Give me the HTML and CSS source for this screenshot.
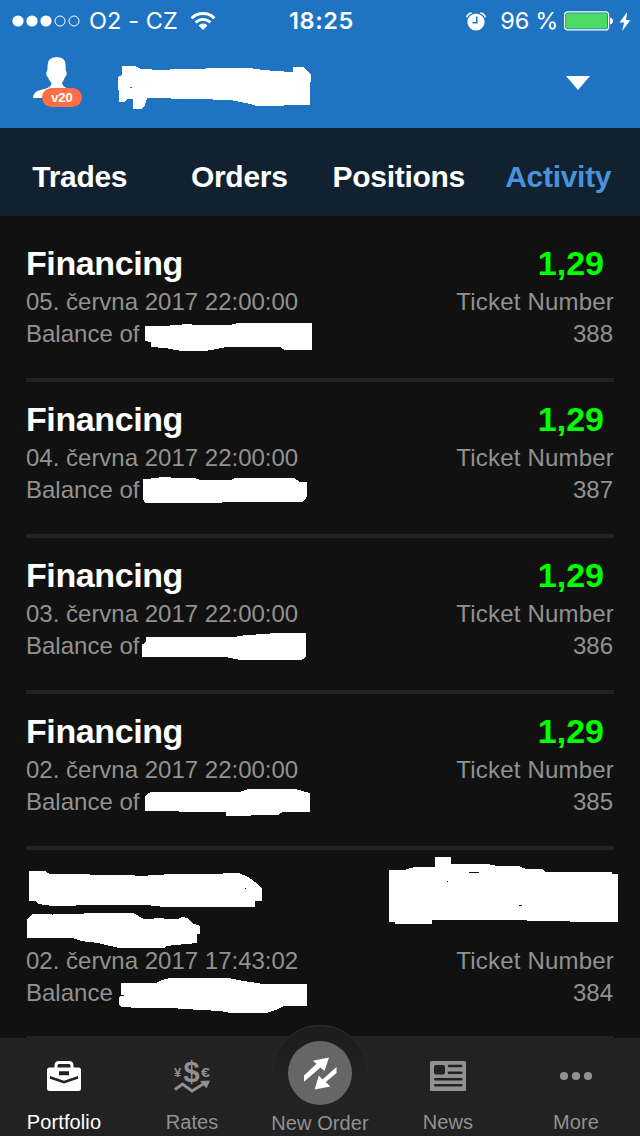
FILE: index.html
```
<!DOCTYPE html>
<html lang="en">
<head>
  <meta charset="UTF-8">
  <meta name="viewport" content="width=device-width, initial-scale=1.0">
  <title>Portfolio – Activity</title>
  <link rel="stylesheet" href="styles.css">
</head>
<body>
  <div class="phone">
    <header class="top">
      <div class="status">
        <div class="status-left">
          <svg class="signal" width="68" height="12" viewBox="0 0 68 12">
            <g fill="#fff"><circle cx="6" cy="6" r="5.6"/><circle cx="20" cy="6" r="5.6"/><circle cx="34" cy="6" r="5.6"/></g>
            <g fill="none" stroke="#fff"><circle cx="48" cy="6" r="5"/><circle cx="62" cy="6" r="5"/></g>
          </svg>
          <span class="carrier">O2 - CZ</span>
          <svg class="wifi" width="26" height="20" viewBox="0 0 26 20">
            <g fill="none" stroke="#fff" stroke-width="2.8">
              <path d="M1.6 7.2a16.2 16.2 0 0 1 22.8 0"/>
              <path d="M5.6 11.4a10.4 10.4 0 0 1 14.8 0"/>
            </g>
            <path d="M8.6 14.4a6.2 6.2 0 0 1 8.8 0L13 19z" fill="#fff"/>
          </svg>
        </div>
        <span class="clock">18:25</span>
        <div class="status-right">
          <svg class="alarm" width="20" height="19" viewBox="0 0 20 19">
            <circle cx="10" cy="10" r="8.6" fill="#fff"/>
            <path d="M.8 5.4Q1.6 1.6 5.6 1M19.2 5.4Q18.4 1.6 14.4 1" fill="none" stroke="#fff" stroke-width="1.7"/>
            <path d="M10.8 4.5v6.3H6.5" fill="none" stroke="#1f74c2" stroke-width="1.5"/>
          </svg>
          <span class="percent">96 %</span>
          <svg class="battery" width="50" height="20" viewBox="0 0 50 20">
            <rect x=".6" y=".9" width="44" height="18" rx="3" fill="none" stroke="#fff" stroke-width="1.2"/>
            <rect x="2" y="2.3" width="41.2" height="15.2" rx="1.6" fill="#4cd964"/>
            <path d="M46 6.5q3 1 3 3.5t-3 3.5z" fill="#fff"/>
          </svg>
          <svg class="bolt" width="12" height="19" viewBox="0 0 12 19"><path d="M8.2 0L.5 10.4h4.6L3.2 19 11.5 8H7z" fill="#fff"/></svg>
        </div>
      </div>
      <div class="account">
        <div class="avatar">
          <svg width="50" height="44" viewBox="0 0 50 44">
            <path d="M15.8 8Q16 1.500 24.500 1 33 1 33.500 8L33.800 15q1.200.3.900 3-.6 2.600-1.800 3.200Q31.500 25 30 27q.5 3.500 6 5.500l8 4V42H1q0-5 5-7.200L14 32.500q5.500-2 5.500-5.500-2.600-2.500-3.400-5.800-1.600-.4-1.900-3.200-.1-2.600 1-3z" fill="#fff"/>
            <path d="M34 36h16v8H34z" fill="#1f74c2"/>
          </svg>
          <span class="badge">v20</span>
        </div>
        <svg class="scribble" viewBox="0 40 640 88">
          <path d="M122 66h13l6 3 21 1 16-1h24l8-1h40l5 1 20 2 18 1v-5h10l8 8v6l-1 3v21l-53 1-7-2-20-4-35-1-48-1-2 7-3 4h-9V99h-5l-4 3h-5l-1-25 4-2z"/>
          <path class="hole" d="M130 87h2v1h-2z"/>
        </svg>
        <svg class="caret" width="24" height="14" viewBox="0 0 24 14"><path d="M0 0h24L12 14z" fill="#fff"/></svg>
      </div>
    </header>

    <nav class="tabs">
      <a class="tab">Trades</a>
      <a class="tab">Orders</a>
      <a class="tab">Positions</a>
      <a class="tab active">Activity</a>
    </nav>

    <main class="list">
      <article class="row">
        <div class="info">
          <h2>Financing</h2>
          <p>05. června 2017 22:00:00</p>
          <p>Balance of</p>
        </div>
        <div class="ticket">
          <strong>1,29</strong>
          <p>Ticket Number</p>
          <p>388</p>
        </div>
        <svg class="scribble" viewBox="0 226 640 156">
          <path d="M145 326h13l24-1v-1h10v1h38l8-2h74v27h-27l-5-3h-54l-14 3-8 1h-22l-17-3-14-1v-5l-6-1z"/>
        </svg>
      </article>
      <article class="row">
        <div class="info">
          <h2>Financing</h2>
          <p>04. června 2017 22:00:00</p>
          <p>Balance of</p>
        </div>
        <div class="ticket">
          <strong>1,29</strong>
          <p>Ticket Number</p>
          <p>387</p>
        </div>
        <svg class="scribble" viewBox="0 382 640 156">
          <path d="M143 479l16-1v-1h12v1h23l7 2h30l4-2h59l6 4h7v14l-2 4-3 2h-80v1h-77l-2-4z"/>
        </svg>
      </article>
      <article class="row">
        <div class="info">
          <h2>Financing</h2>
          <p>03. června 2017 22:00:00</p>
          <p>Balance of</p>
        </div>
        <div class="ticket">
          <strong>1,29</strong>
          <p>Ticket Number</p>
          <p>386</p>
        </div>
        <svg class="scribble" viewBox="0 538 640 156">
          <path d="M146 637h91v-1l25-2 15-1h29v23l-2 3-5 1h-59l-14-3h-84v-13h2l2-3z"/>
        </svg>
      </article>
      <article class="row">
        <div class="info">
          <h2>Financing</h2>
          <p>02. června 2017 22:00:00</p>
          <p>Balance of</p>
        </div>
        <div class="ticket">
          <strong>1,29</strong>
          <p>Ticket Number</p>
          <p>385</p>
        </div>
        <svg class="scribble" viewBox="0 694 640 156">
          <path d="M145 797l3-4 4-1h87l10-3h46l15 4v19h-27l-5 3h-20l-14 1h-18v-4h-47v-1h-34z"/>
        </svg>
      </article>
      <article class="row tall">
        <div class="info">
          <p>02. června 2017 17:43:02</p>
          <p>Balance</p>
        </div>
        <div class="ticket">
          <p>Ticket Number</p>
          <p>384</p>
        </div>
        <svg class="scribble" viewBox="0 850 640 190">
          <path d="M29 871h16l5 3 80 1 10 1 32-2h43l15-1h9l9 4 10 7 4 5v12h-7v6h-90l-19-2H99l-46 1-15-2-3-3h-6z"/>
          <path d="M27 919l6-5h19l63-1h18l11 6h9l2-1h8l2 1h13l4-2 5 1 7 6 6 2v8h-3v9l-31 3-1 2h-46l-21-5-17-2-8-3H27z"/>
          <path d="M121 983h35l6-3 8-2h58l10 2 25 4h44v22h-23l-8 4-10 3h-36l-9-2-21-1-30-2h-29l-20-1-2-3v-7l2-1z"/>
          <path d="M389 870h15l11-3h20v-10h16v7h36l10 2h22l7 3h16l3 3h67v2h6v48h-48v-1h-43v-1h-95v4h-37v-2h-6z"/>
          <path class="hole" d="M469 872h10v1h-10zM447 881h1v1h-1zM519 905h3v1h-3zM52 914h1v1h-1zM245 888h1v1h-1zM121 995h3v1h-3z"/>
        </svg>
      </article>
    </main>

    <nav class="bottom">
      <a class="item active">
        <svg width="36" height="36" viewBox="0 0 36 36">
          <path d="M10 11V7.500Q10 4.500 13 4.500h10q3 0 3 3V11" fill="none" stroke="#fff" stroke-width="3"/>
          <rect x="1" y="9.500" width="34" height="23.500" rx="2.500" fill="#fff"/>
          <path d="M13 13.200h10v4H13zM4 18l14 4.700L32 18v2.800l-14 4.700-14-4.700z" fill="#222"/>
        </svg>
        <span>Portfolio</span>
      </a>
      <a class="item">
        <svg class="rates" width="38" height="36" viewBox="0 0 38 36">
          <g class="money">
            <text x="1" y="18.500" font-size="13">¥</text>
            <text x="10.500" y="23.500" font-size="29">$</text>
            <text x="28" y="19" font-size="13" textLength="9" lengthAdjust="spacingAndGlyphs">€</text>
          </g>
          <path d="M2 31.500l7.500-5.500 9.500 7 12-7.500" fill="none" stroke="#919191" stroke-width="3"/>
          <path d="M27 23l10-.5-3.500 8z" fill="#919191"/>
        </svg>
        <span>Rates</span>
      </a>
      <a class="item order">
        <div class="halo"><svg width="64" height="64" viewBox="0 0 64 64">
          <circle cx="32" cy="32" r="32" fill="#666"/>
          <path d="M41 16.500L24.800 19.700l3.700 3L16 34.500v6.300L32.400 26.600l4.100 3.500zM48.500 26v6L37.800 41l4.500 4.400L26.600 48.500l4.300-14 3.500 4z" fill="#fff"/>
        </svg></div>
        <span>New Order</span>
      </a>
      <a class="item">
        <svg width="36" height="36" viewBox="0 0 36 36">
          <rect y="3" width="36" height="30" rx="1.500" fill="#919191"/>
          <rect x="4" y="7" width="11" height="9.500" rx="2" fill="#222"/>
          <path d="M19 8h12.200M19 14.700h12.200M5.300 21.300h26M5.300 27.300h26" stroke="#222" stroke-width="2.600" stroke-linecap="round"/>
        </svg>
        <span>News</span>
      </a>
      <a class="item">
        <svg width="36" height="36" viewBox="0 0 36 36" fill="#919191">
          <circle cx="6" cy="18" r="4.100"/><circle cx="18" cy="18" r="4.100"/><circle cx="30" cy="18" r="4.100"/>
        </svg>
        <span>More</span>
      </a>
    </nav>
  </div>
</body>
</html>
```

FILE: styles.css
```
* { box-sizing:border-box; }
body { margin:0; background:#111; color:#fff; font-family:"Liberation Sans",Arial,sans-serif; }
h2, p { margin:0; }
svg { display:block; flex:none; }
.phone { width:640px; height:1136px; display:flex; flex-direction:column; overflow:hidden; }

/* status bar + account */
.top { height:128px; background:#1f74c2; }
.status { height:40px; display:grid; grid-template-columns:1fr auto 1fr; align-items:center; padding:1px 9px 0 12px; font-family:Inter,sans-serif; font-size:23.5px; line-height:40px; }
.status-left, .status-right { display:flex; align-items:center; }
.status-right { justify-content:flex-end; }
.carrier { margin-left:9px; letter-spacing:.1px; }
.wifi { margin-left:12px; }
.clock { font-weight:600; letter-spacing:.6px; }
.percent { margin-left:14px; letter-spacing:-.3px; }
.battery { margin-left:6px; }
.bolt { margin-left:5px; }

.account { position:relative; height:88px; display:flex; align-items:center; justify-content:space-between; padding:0 50px 0 32px; }
.avatar { position:relative; margin-top:-12px; }
.badge { position:absolute; left:10px; top:32px; width:40px; height:19px; border-radius:10px; background:#ff6e46; font-size:13px; font-weight:bold; line-height:19px; text-align:center; }
.caret { margin-top:-2px; }
.scribble { position:absolute; left:0; top:0; width:640px; fill:#fff; shape-rendering:crispEdges; pointer-events:none; }
.hole { fill:#111; }
.account .hole { fill:#1f74c2; }

/* section tabs */
.tabs { height:88px; background:#122130; display:grid; grid-template-columns:repeat(4,1fr); align-items:center; padding:10px 2px 0 0; }
.tab { text-align:center; font-size:30px; font-weight:bold; letter-spacing:-.3px; white-space:nowrap; }
.tab.active { color:#4992dc; }

/* activity list */
.list { height:822px; padding-top:10px; overflow:hidden; }
.row { position:relative; height:156px; padding:17px 26px 0; display:flex; justify-content:space-between; color:#919191; font-size:24px; line-height:32px; }
.row::after { content:""; position:absolute; left:26px; right:26px; bottom:0; height:4px; background:#222; }
.row h2, .row strong { display:block; height:43px; font-size:34px; line-height:40px; font-weight:bold; }
.row h2 { color:#fff; letter-spacing:-.4px; }
.row strong { color:#0f0; padding-right:10px; }
.ticket { text-align:right; }
.ticket p { letter-spacing:.2px; }
.ticket p:last-child { padding-right:1px; letter-spacing:0; }
.row.tall { height:190px; padding-top:95px; }

/* bottom navigation */
.bottom { height:98px; background:#222; display:grid; grid-template-columns:repeat(5,1fr); }
.item { position:relative; display:flex; flex-direction:column; align-items:center; padding-top:20px; color:#919191; font-size:20px; line-height:24px; }
.item span { position:relative; margin-top:16px; letter-spacing:.1px; }
.item.active { color:#fff; }
.item.order span { margin-top:53px; }
.halo { position:absolute; top:-13px; width:96px; height:96px; padding:16px; border-radius:50%; background:linear-gradient(#1c1c1c,#222 60%); box-shadow:inset 0 1px #303030; }
.rates { overflow:visible; }
.money { fill:#919191; font-weight:bold; }
```
